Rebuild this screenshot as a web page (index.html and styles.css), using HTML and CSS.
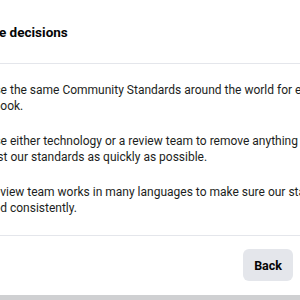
FILE: index.html
```html
<!DOCTYPE html>
<html lang="en">
<head>
    <meta charset="UTF-8">
    <meta name="viewport" content="width=device-width, initial-scale=1.0">
    <title>How we make decisions</title>
    <link rel="stylesheet" href="styles.css">
</head>
<body>
    <div class="dialog">
        <div class="dialog-header">
            <h2 class="dialog-title">How we make decisions</h2>
        </div>

        <div class="dialog-body">
            <p>We use the same Community Standards around the world for everyone on<br>Facebook.</p>
            <p>We use either technology or a review team to remove anything that goes<br>against our standards as quickly as possible.</p>
            <p>Our review team works in many languages to make sure our standards are<br>applied consistently.</p>
        </div>

        <div class="dialog-footer">
            <button type="button" class="btn-back">Back</button>
        </div>
    </div>
</body>
</html>
```

FILE: styles.css
```css
body {
    margin: 0;
    padding: 0;
    height: 300px;
    overflow: hidden;
    background-color: #cfd0d2;
    font-family: Roboto, "Noto Sans", Arial, sans-serif;
    color: #1c1e21;
}

.dialog {
    width: 357px;
    margin-left: -48px;
    background-color: #fff;
}

.dialog-header {
    height: 63px;
    display: flex;
    align-items: center;
    padding: 0 16px;
    border-bottom: 1px solid #e4e6eb;
}

.dialog-title {
    margin: 0;
    font-size: 13.5px;
    font-weight: 700;
    color: #050505;
    text-indent: -46px;
}

.dialog-body {
    padding: 18px 16px 19px;
    border-bottom: 1px solid #e4e6eb;
}

.dialog-body p {
    margin: 0 0 19px;
    font-size: 12px;
    line-height: 16px;
    white-space: nowrap;
}

.dialog-body p:last-child {
    margin-bottom: 0;
}

.dialog-footer {
    display: flex;
    justify-content: flex-end;
    padding: 13px 16px 14px;
}

.btn-back {
    height: 32px;
    padding: 0 11px;
    border: none;
    border-radius: 6px;
    background-color: #e4e6eb;
    color: #050505;
    font-family: inherit;
    font-size: 12.5px;
    font-weight: 700;
    cursor: pointer;
}
```
